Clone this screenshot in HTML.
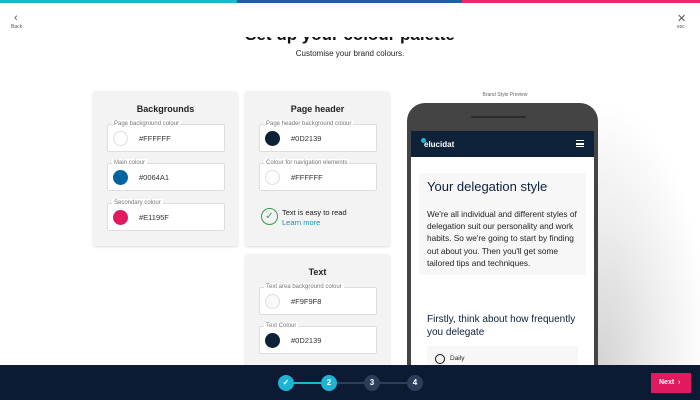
<!DOCTYPE html>
<html><head><style>
*{margin:0;padding:0;box-sizing:border-box}
body{width:700px;height:400px;overflow:hidden;background:#fff;font-family:"Liberation Sans",sans-serif;position:relative;color:#222}
.abs{position:absolute}
.panel{position:absolute;background:#f3f3f3;border-radius:3px;box-shadow:0 1px 2px rgba(0,0,0,.15)}
.panel h3{text-align:center;font-size:9px;font-weight:bold;color:#222;margin-top:13px}
.field{position:absolute;left:14px;width:118px;height:28px;background:#fff;border:1px solid #ddd;border-radius:2px}
.field .lbl{position:absolute;left:4px;top:-5px;background:#fff;padding:0 2px;font-size:6px;color:#777;line-height:8px}
.field .dot{position:absolute;left:5px;top:6px;width:15px;height:15px;border-radius:50%;border:1px solid #ddd}
.field .hex{position:absolute;left:31px;top:9px;font-size:7.5px;color:#333}
.step{position:absolute;top:375px;width:16px;height:16px;border-radius:50%;color:#fff;font-size:8px;font-weight:bold;text-align:center;line-height:16px}
</style></head><body>
<div class="abs" style="left:0;top:25px;width:700px;text-align:center;font-size:17px;font-weight:bold;color:#111">Set up your colour palette</div>
<div class="abs" style="left:0;top:0;width:700px;height:37px;background:#fff"></div>
<div class="abs" style="left:0;top:0;width:237px;height:3px;background:#1eb4d4"></div>
<div class="abs" style="left:237px;top:0;width:225px;height:3px;background:#1f5fa6"></div>
<div class="abs" style="left:462px;top:0;width:238px;height:3px;background:#e8296a"></div>
<div class="abs" style="left:14px;top:12px;font-size:11px;color:#555">&#8249;</div>
<div class="abs" style="left:11px;top:24px;font-size:5px;color:#555">Back</div>
<div class="abs" style="left:677px;top:12px;font-size:11px;color:#555">&#10005;</div>
<div class="abs" style="left:677px;top:24px;font-size:5px;color:#555">esc</div>
<div class="abs" style="left:0;top:49px;width:700px;text-align:center;font-size:8px;color:#222">Customise your brand colours.</div>

<div class="abs" style="left:560px;top:60px;width:140px;height:305px;background:radial-gradient(ellipse 110px 260px at 40px 300px,#d4d4d4,#eeeeee 55%,#fff 100%)"></div>

<div class="panel" style="left:93px;top:91px;width:145px;height:155px"><h3>Backgrounds</h3>
<div class="field" style="top:33px"><span class="lbl">Page background colour</span><span class="dot" style="background:#fff"></span><span class="hex">#FFFFFF</span></div>
<div class="field" style="top:72px"><span class="lbl">Main colour</span><span class="dot" style="background:#0064a1;border-color:#0064a1"></span><span class="hex">#0064A1</span></div>
<div class="field" style="top:112px"><span class="lbl">Secondary colour</span><span class="dot" style="background:#e1195f;border-color:#e1195f"></span><span class="hex">#E1195F</span></div>
</div>
<div class="panel" style="left:245px;top:91px;width:145px;height:155px"><h3>Page header</h3>
<div class="field" style="top:33px"><span class="lbl">Page header background colour</span><span class="dot" style="background:#0d2139;border-color:#0d2139"></span><span class="hex">#0D2139</span></div>
<div class="field" style="top:72px"><span class="lbl">Colour for navigation elements</span><span class="dot" style="background:#fff"></span><span class="hex">#FFFFFF</span></div>
<div class="abs" style="left:16px;top:117px;width:17px;height:17px;border-radius:50%;border:1.3px solid #3a9a4a;color:#3a9a4a;font-size:10px;text-align:center;line-height:15px">&#10003;</div>
<div class="abs" style="left:37px;top:117px;font-size:7.5px;color:#222">Text is easy to read</div>
<div class="abs" style="left:37px;top:127px;font-size:7.5px;color:#1d8fb0">Learn more</div>
</div>
<div class="panel" style="left:245px;top:254px;width:145px;height:120px"><h3>Text</h3>
<div class="field" style="top:33px"><span class="lbl">Text area background colour</span><span class="dot" style="background:#f9f9f8"></span><span class="hex">#F9F9F8</span></div>
<div class="field" style="top:72px"><span class="lbl">Text Colour</span><span class="dot" style="background:#0d2139;border-color:#0d2139"></span><span class="hex">#0D2139</span></div>
</div>

<div class="abs" style="left:400px;top:92px;width:210px;text-align:center;font-size:5px;color:#666">Brand Style Preview</div>
<div class="abs" style="left:407px;top:103px;width:191px;height:280px;background:#444;border-radius:18px 18px 0 0"></div>
<div class="abs" style="left:471px;top:116px;width:55px;height:2px;background:#2c2c2c;border-radius:1px"></div>
<div class="abs" style="left:411px;top:131px;width:183px;height:240px;background:#fff"></div>
<div class="abs" style="left:411px;top:131px;width:183px;height:26px;background:#0d2139"></div>
<div class="abs" style="left:421px;top:138px;width:5px;height:5px;border-radius:50%;background:#1eb4d4"></div>
<div class="abs" style="left:424px;top:140px;font-size:8px;font-weight:bold;color:#fff">elucidat</div>
<div class="abs" style="left:576px;top:140px;width:8px;height:7px;border-top:1.5px solid #fff;border-bottom:1.5px solid #fff"></div>
<div class="abs" style="left:576px;top:143px;width:8px;height:1.5px;background:#fff"></div>
<div class="abs" style="left:419px;top:173px;width:167px;height:102px;background:#f7f7f8"></div>
<div class="abs" style="left:427px;top:179px;font-size:13px;color:#0d2139">Your delegation style</div>
<div class="abs" style="left:427px;top:208px;width:156px;font-size:8.3px;line-height:12.2px;color:#222">We're all individual and different styles of delegation suit our personality and work habits. So we're going to start by finding out about you. Then you'll get some tailored tips and techniques.</div>
<div class="abs" style="left:427px;top:313px;width:150px;font-size:10px;line-height:13px;color:#0d2139">Firstly, think about how frequently you delegate</div>
<div class="abs" style="left:427px;top:346px;width:151px;height:20px;background:#f7f7f8"></div>
<div class="abs" style="left:435px;top:354px;width:10px;height:10px;border-radius:50%;border:1.5px solid #111"></div>
<div class="abs" style="left:450px;top:355px;font-size:6.5px;color:#222">Daily</div>

<div class="abs" style="left:0;top:365px;width:700px;height:35px;background:#0d1a33"></div>
<div class="abs" style="left:286px;top:382px;width:128px;height:2px;background:#2e3e5a"></div>
<div class="abs" style="left:286px;top:382px;width:42px;height:2px;background:#1eb4d4"></div>
<div class="step" style="left:278px;background:#1eb4d4">&#10003;</div>
<div class="step" style="left:321px;background:#1eb4d4">2</div>
<div class="step" style="left:364px;background:#2e3e5a">3</div>
<div class="step" style="left:407px;background:#2e3e5a">4</div>
<div class="abs" style="left:651px;top:373px;width:40px;height:20px;background:#e1195f;color:#fff;font-size:7px;font-weight:bold;line-height:20px;padding-left:8px">Next &nbsp;&#8250;</div>
</body></html>
